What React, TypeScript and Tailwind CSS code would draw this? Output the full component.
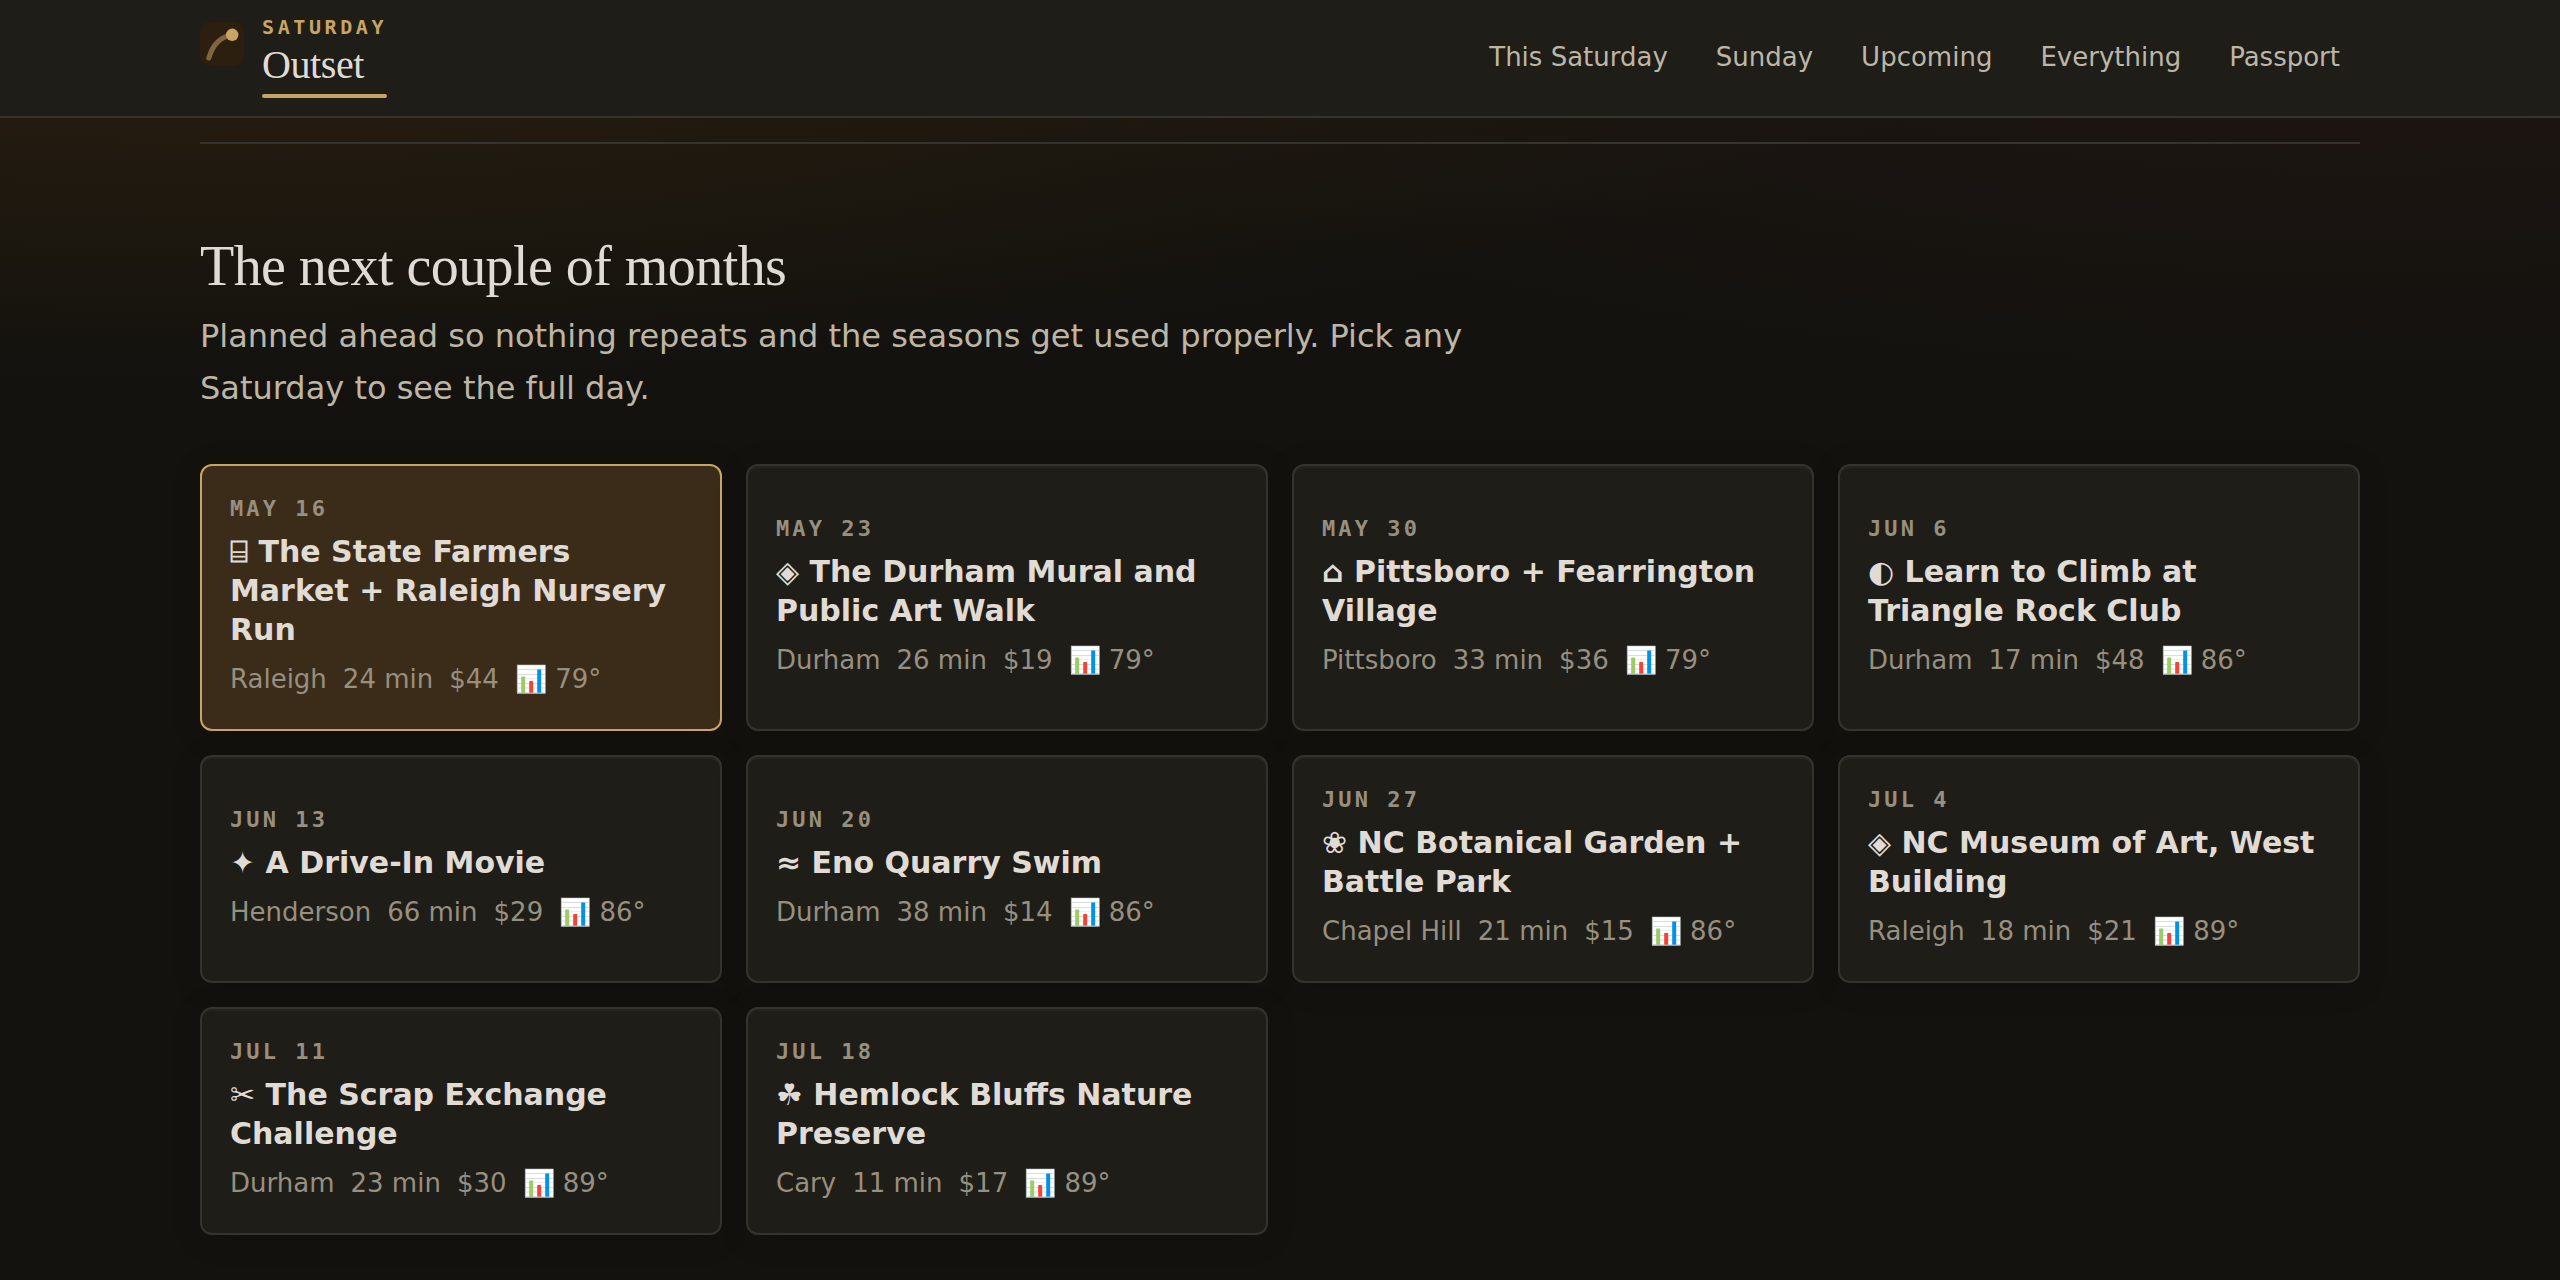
import clsx from "clsx";

type Outing = {
  date: string;
  glyph: string;
  title: string;
  city: string;
  drive: string;
  cost: string;
  high: string;
};

const links = ["This Saturday", "Sunday", "Upcoming", "Everything", "Passport"];

const outings: Outing[] = [
  { date: "May 16", glyph: "⌸", title: "The State Farmers Market + Raleigh Nursery Run", city: "Raleigh", drive: "24 min", cost: "$44", high: "79°" },
  { date: "May 23", glyph: "◈", title: "The Durham Mural and Public Art Walk", city: "Durham", drive: "26 min", cost: "$19", high: "79°" },
  { date: "May 30", glyph: "⌂", title: "Pittsboro + Fearrington Village", city: "Pittsboro", drive: "33 min", cost: "$36", high: "79°" },
  { date: "Jun 6", glyph: "◐", title: "Learn to Climb at Triangle Rock Club", city: "Durham", drive: "17 min", cost: "$48", high: "86°" },
  { date: "Jun 13", glyph: "✦", title: "A Drive-In Movie", city: "Henderson", drive: "66 min", cost: "$29", high: "86°" },
  { date: "Jun 20", glyph: "≈", title: "Eno Quarry Swim", city: "Durham", drive: "38 min", cost: "$14", high: "86°" },
  { date: "Jun 27", glyph: "❀", title: "NC Botanical Garden + Battle Park", city: "Chapel Hill", drive: "21 min", cost: "$15", high: "86°" },
  { date: "Jul 4", glyph: "◈", title: "NC Museum of Art, West Building", city: "Raleigh", drive: "18 min", cost: "$21", high: "89°" },
  { date: "Jul 11", glyph: "✂", title: "The Scrap Exchange Challenge", city: "Durham", drive: "23 min", cost: "$30", high: "89°" },
  { date: "Jul 18", glyph: "☘", title: "Hemlock Bluffs Nature Preserve", city: "Cary", drive: "11 min", cost: "$17", high: "89°" },
];

function Logo() {
  return (
    <svg viewBox="0 0 44 44" className="size-11 shrink-0" aria-hidden="true">
      <rect width="44" height="44" rx="10" fill="#2d1f10" />
      <path d="M8.8 36C12 25 19 15 32 13" fill="none" stroke="#7f6640" strokeWidth="5" strokeLinecap="round" />
      <circle cx="32.2" cy="12.8" r="6.2" fill="#c9a464" />
    </svg>
  );
}

function Header() {
  return (
    <header className="border-b-2 border-[#35332d] bg-[#1e1d18]">
      <div className="mx-auto flex h-29 max-w-[2160px] items-center justify-between pb-1">
        <a href="#top" className="flex items-start gap-4.5">
          <span className="pt-2">
            <Logo />
          </span>
          <span className="flex flex-col">
            <span className="font-['DejaVu_Sans_Mono',monospace] text-[20px] leading-[26px] font-bold tracking-[0.18em] text-[#c9a464] uppercase">
              Saturday
            </span>
            <span className="font-['Liberation_Serif',serif] text-[40px] leading-[50px] tracking-[-0.01em] text-[#e0dcd5]">
              Outset
            </span>
            <span className="mt-1 h-1 rounded-full bg-[#c9a464]" />
          </span>
        </a>
        <nav className="flex gap-2">
          {links.map((link) => (
            <a key={link} href="#" className="px-5 pt-2.5 pb-2 text-[26px] leading-10 text-[#bdb6a7]">
              {link}
            </a>
          ))}
        </nav>
      </div>
    </header>
  );
}

function OutingCard({ outing, active }: { outing: Outing; active: boolean }) {
  return (
    <button
      type="button"
      aria-pressed={active}
      className={clsx(
        "flex flex-col justify-center gap-2 rounded-xl border-2 p-7 text-left",
        active
          ? "border-[#c9a464] bg-[#3b2c19] shadow-[0_4px_32px_rgba(0,0,0,0.12)]"
          : "border-[#35332d] bg-[#1e1d18] shadow-[inset_0_2px_0_rgba(255,240,220,0.04),0_4px_32px_rgba(0,0,0,0.12)]",
      )}
    >
      <span className="font-['DejaVu_Sans_Mono',monospace] text-[22px] leading-[30px] font-bold tracking-[0.14em] text-[#978f80] uppercase">
        {outing.date}
      </span>
      <span className="text-[30px] leading-[39px] font-bold text-[#e0dcd5]">
        {`${outing.glyph} ${outing.title}`}
      </span>
      <span className="flex gap-4 text-[26px] leading-11 text-[#978f80]">
        <span>{outing.city}</span>
        <span>{outing.drive}</span>
        <span>{outing.cost}</span>
        <span>{`📊 ${outing.high}`}</span>
      </span>
    </button>
  );
}

export default function App() {
  return (
    <div
      id="top"
      className="min-h-screen bg-[#13120e] bg-[radial-gradient(ellipse_70%_380px_at_8%_0px,#2b1f10,transparent),radial-gradient(ellipse_55%_380px_at_92%_0px,#201613,transparent)] bg-no-repeat font-['DejaVu_Sans',sans-serif]"
    >
      <Header />
      <main className="mx-auto max-w-[2160px] pt-6">
        <section className="border-t-2 border-[#35332d] pt-[90px] pb-11">
          <h2 className="font-['Liberation_Serif',serif] text-[56px] leading-16 tracking-[-0.01em] text-[#e0dcd5]">
            The next couple of months
          </h2>
          <p className="mt-3 max-w-[1300px] text-[32px] leading-13 text-[#bdb6a7]">
            Planned ahead so nothing repeats and the seasons get used properly. Pick any Saturday to see the full day.
          </p>
          <div className="mt-12.5 grid grid-cols-4 gap-6">
            {outings.map((outing, i) => (
              <OutingCard key={outing.date} outing={outing} active={i === 0} />
            ))}
          </div>
        </section>
      </main>
    </div>
  );
}
